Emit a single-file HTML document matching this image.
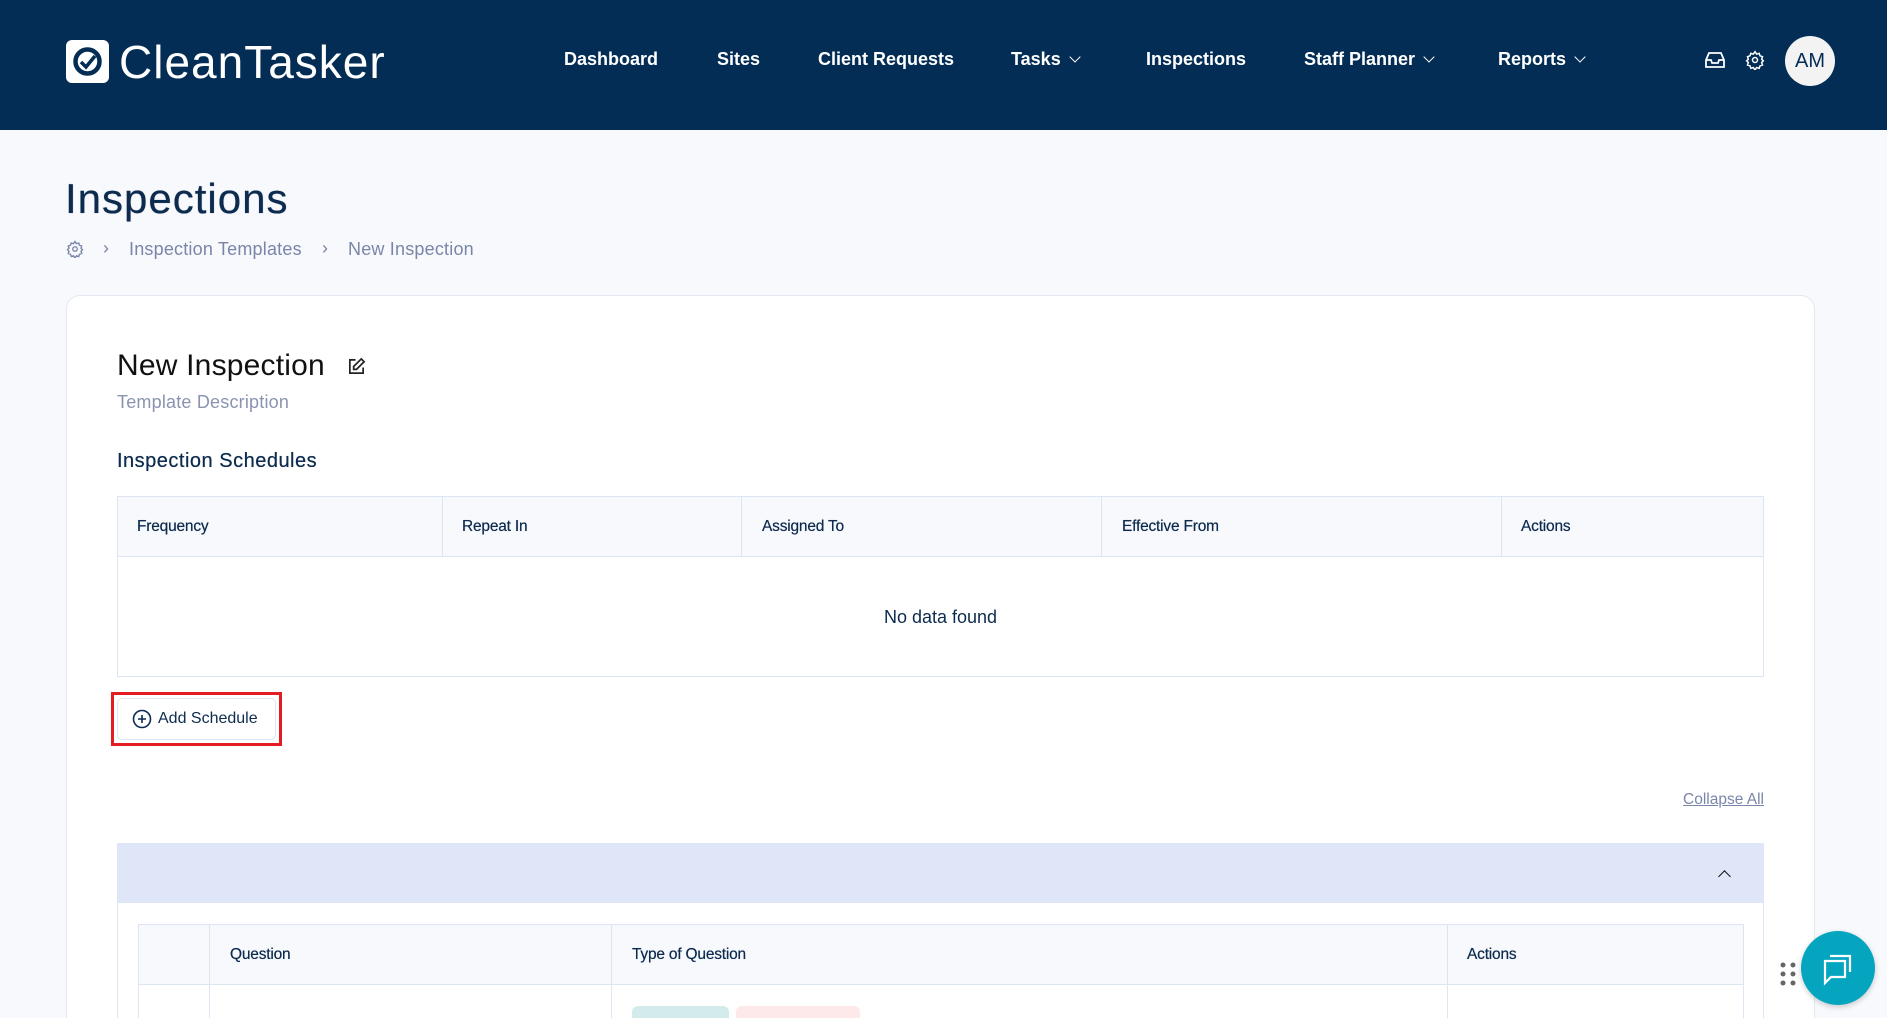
<!DOCTYPE html>
<html><head><style>
*{box-sizing:border-box;margin:0;padding:0}
html,body{width:1887px;height:1018px;overflow:hidden}
body{background:#f7f9fd;font-family:"Liberation Sans",sans-serif}
#w{position:relative;width:1887px;height:1018px;overflow:hidden}
.abs{position:absolute}
.hdr{left:0;top:0;width:1887px;height:130px;background:#032d55}
.nav{color:#fff;font-size:18px;font-weight:bold;top:49px;white-space:nowrap}
.chev{display:inline-block;width:8px;height:8px;border-right:1.6px solid #fff;border-bottom:1.6px solid #fff;transform:rotate(45deg);margin-left:10px;position:relative;top:-4px}
.card{left:66px;top:295px;width:1749px;height:723px;background:#fff;border:1px solid #e3e8f2;border-bottom:none;border-radius:14px 14px 0 0}
.th{font-size:15.5px;color:#0d2b4e;letter-spacing:-0.2px;text-shadow:0 0 0.4px #0d2b4e}
.line{background:#dde4f2}
</style></head><body><div id="w">
<div class="abs hdr"></div>
<svg class="abs" style="left:66px;top:40px" width="43" height="43" viewBox="0 0 43 43"><rect width="43" height="43" rx="6" fill="#fff"/><circle cx="21.5" cy="21.5" r="12" fill="none" stroke="#032d55" stroke-width="4.5"/><path d="M15 22l5 5 9-11" fill="none" stroke="#032d55" stroke-width="3.5"/></svg>
<div class="abs" style="left:119px;top:35px;color:#fff;font-size:46px;letter-spacing:1px">CleanTasker</div>
<div class="abs nav" style="left:564px">Dashboard</div>
<div class="abs nav" style="left:717px">Sites</div>
<div class="abs nav" style="left:818px">Client Requests</div>
<div class="abs nav" style="left:1011px">Tasks<span class="chev"></span></div>
<div class="abs nav" style="left:1146px">Inspections</div>
<div class="abs nav" style="left:1304px">Staff Planner<span class="chev"></span></div>
<div class="abs nav" style="left:1498px">Reports<span class="chev"></span></div>
<svg class="abs" style="left:1705px;top:51px" width="20" height="18" viewBox="0 0 20 18" fill="none" stroke="#fff" stroke-width="1.8"><path d="M1 9l3-7h12l3 7v7H1z"/><path d="M1 9h5l1 3h6l1-3h5"/></svg>
<svg class="abs" style="left:1745px;top:50px" width="20" height="20" viewBox="0 0 24 24" fill="none" stroke="#fff" stroke-width="1.8"><circle cx="12" cy="12" r="3"/><path d="M12 2l2 3 3-1 1 3 3 1-1 3 2 2-2 2 1 3-3 1-1 3-3-1-2 3-2-3-3 1-1-3-3-1 1-3-2-2 2-2-1-3 3-1 1-3 3 1z"/></svg>
<div class="abs" style="left:1785px;top:36px;width:50px;height:50px;border-radius:50%;background:#f3f3f3;color:#032d55;font-size:20px;text-align:center;line-height:50px">AM</div>

<div class="abs" style="left:65px;top:175px;font-size:42px;color:#0d2b4e;letter-spacing:1px;text-shadow:0 0 0.6px #0d2b4e">Inspections</div>
<svg class="abs" style="left:66px;top:240px" width="18" height="18" viewBox="0 0 24 24" fill="none" stroke="#7a86a8" stroke-width="1.8"><circle cx="12" cy="12" r="3"/><path d="M12 2l2 3 3-1 1 3 3 1-1 3 2 2-2 2 1 3-3 1-1 3-3-1-2 3-2-3-3 1-1-3-3-1 1-3-2-2 2-2-1-3 3-1 1-3 3 1z"/></svg>
<div class="abs" style="left:103px;top:238px;font-size:18px;color:#7a86a8">›</div>
<div class="abs" style="left:129px;top:239px;font-size:18px;color:#7a86a8;letter-spacing:0.2px">Inspection Templates</div>
<div class="abs" style="left:322px;top:238px;font-size:18px;color:#7a86a8">›</div>
<div class="abs" style="left:348px;top:239px;font-size:18px;color:#7a86a8;letter-spacing:0.2px">New Inspection</div>

<div class="abs card"></div>
<div class="abs" style="left:117px;top:349px;font-size:30px;color:#111;letter-spacing:0.2px">New Inspection</div>
<svg class="abs" style="left:347px;top:357px" width="19" height="19" viewBox="0 0 20 20" fill="none" stroke="#222" stroke-width="1.8"><path d="M9 3H3v14h14v-6"/><path d="M15 2l3 3-8 8H7v-3z"/></svg>
<div class="abs" style="left:117px;top:392px;font-size:18px;color:#8a94b0;letter-spacing:0.2px">Template Description</div>
<div class="abs" style="left:117px;top:450px;font-size:20px;color:#0d2b4e;letter-spacing:0.5px;text-shadow:0 0 0.5px #0d2b4e">Inspection Schedules</div>

<div class="abs" style="left:117px;top:496px;width:1647px;height:181px;border:1px solid #dde4f2;background:#fff"></div>
<div class="abs" style="left:118px;top:497px;width:1645px;height:60px;background:#f7f9fd;border-bottom:1px solid #dde4f2"></div>
<div class="abs line" style="left:442px;top:496px;width:1px;height:61px"></div>
<div class="abs line" style="left:741px;top:496px;width:1px;height:61px"></div>
<div class="abs line" style="left:1101px;top:496px;width:1px;height:61px"></div>
<div class="abs line" style="left:1501px;top:496px;width:1px;height:61px"></div>
<div class="abs th" style="left:137px;top:518px">Frequency</div>
<div class="abs th" style="left:462px;top:518px">Repeat In</div>
<div class="abs th" style="left:762px;top:518px">Assigned To</div>
<div class="abs th" style="left:1122px;top:518px">Effective From</div>
<div class="abs th" style="left:1521px;top:518px">Actions</div>
<div class="abs" style="left:117px;top:607px;width:1647px;text-align:center;font-size:18px;color:#0d2b4e">No data found</div>

<div class="abs" style="left:111px;top:692px;width:171px;height:54px;border:3px solid #e31b23"></div>
<div class="abs" style="left:117px;top:698px;width:159px;height:42px;border:1px solid #dde4f2;border-radius:5px;background:#fff"></div>
<svg class="abs" style="left:132px;top:709px" width="20" height="20" viewBox="0 0 20 20" fill="none" stroke="#0d2b4e" stroke-width="1.6"><circle cx="10" cy="10" r="8.5"/><path d="M10 6v8M6 10h8"/></svg>
<div class="abs" style="left:158px;top:710px;font-size:16px;color:#0d2b4e">Add Schedule</div>

<div class="abs" style="left:1664px;top:791px;width:100px;text-align:right;font-size:15.5px;color:#7a86a8;text-decoration:underline">Collapse All</div>

<div class="abs" style="left:117px;top:843px;width:1647px;height:175px;border:1px solid #dde4f2;border-bottom:none;background:#fff"></div>
<div class="abs" style="left:117px;top:843px;width:1647px;height:60px;background:#dfe6f7"></div>
<div class="abs" style="left:1720px;top:872px;width:9px;height:9px;border-left:1.8px solid #111;border-top:1.8px solid #111;transform:rotate(45deg)"></div>

<div class="abs" style="left:138px;top:924px;width:1606px;height:94px;border:1px solid #dde4f2;border-bottom:none;background:#fff"></div>
<div class="abs" style="left:139px;top:925px;width:1604px;height:60px;background:#f7f9fd;border-bottom:1px solid #dde4f2"></div>
<div class="abs line" style="left:209px;top:924px;width:1px;height:94px"></div>
<div class="abs line" style="left:611px;top:924px;width:1px;height:94px"></div>
<div class="abs line" style="left:1447px;top:924px;width:1px;height:94px"></div>
<div class="abs th" style="left:230px;top:946px">Question</div>
<div class="abs th" style="left:632px;top:946px">Type of Question</div>
<div class="abs th" style="left:1467px;top:946px">Actions</div>
<div class="abs" style="left:632px;top:1006px;width:97px;height:12px;background:#d3eceb;border-radius:6px 6px 0 0"></div>
<div class="abs" style="left:736px;top:1006px;width:124px;height:12px;background:#fde9e9;border-radius:6px 6px 0 0"></div>

<svg class="abs" style="left:1779px;top:961px" width="20" height="28"><g fill="#666"><circle cx="4" cy="4" r="2.5"/><circle cx="14" cy="4" r="2.5"/><circle cx="4" cy="13" r="2.5"/><circle cx="14" cy="13" r="2.5"/><circle cx="4" cy="22" r="2.5"/><circle cx="14" cy="22" r="2.5"/></g></svg>
<div class="abs" style="left:1801px;top:931px;width:74px;height:74px;border-radius:50%;background:#05a5c0;box-shadow:0 2px 6px rgba(0,0,0,.2)"></div>
<svg class="abs" style="left:1820px;top:950px" width="36" height="36" viewBox="0 0 36 36" fill="none" stroke="#fff" stroke-width="2.2"><path d="M10 6h20v16"/><path d="M5 11h20v16H11l-6 6z"/></svg>
</div></body></html>
